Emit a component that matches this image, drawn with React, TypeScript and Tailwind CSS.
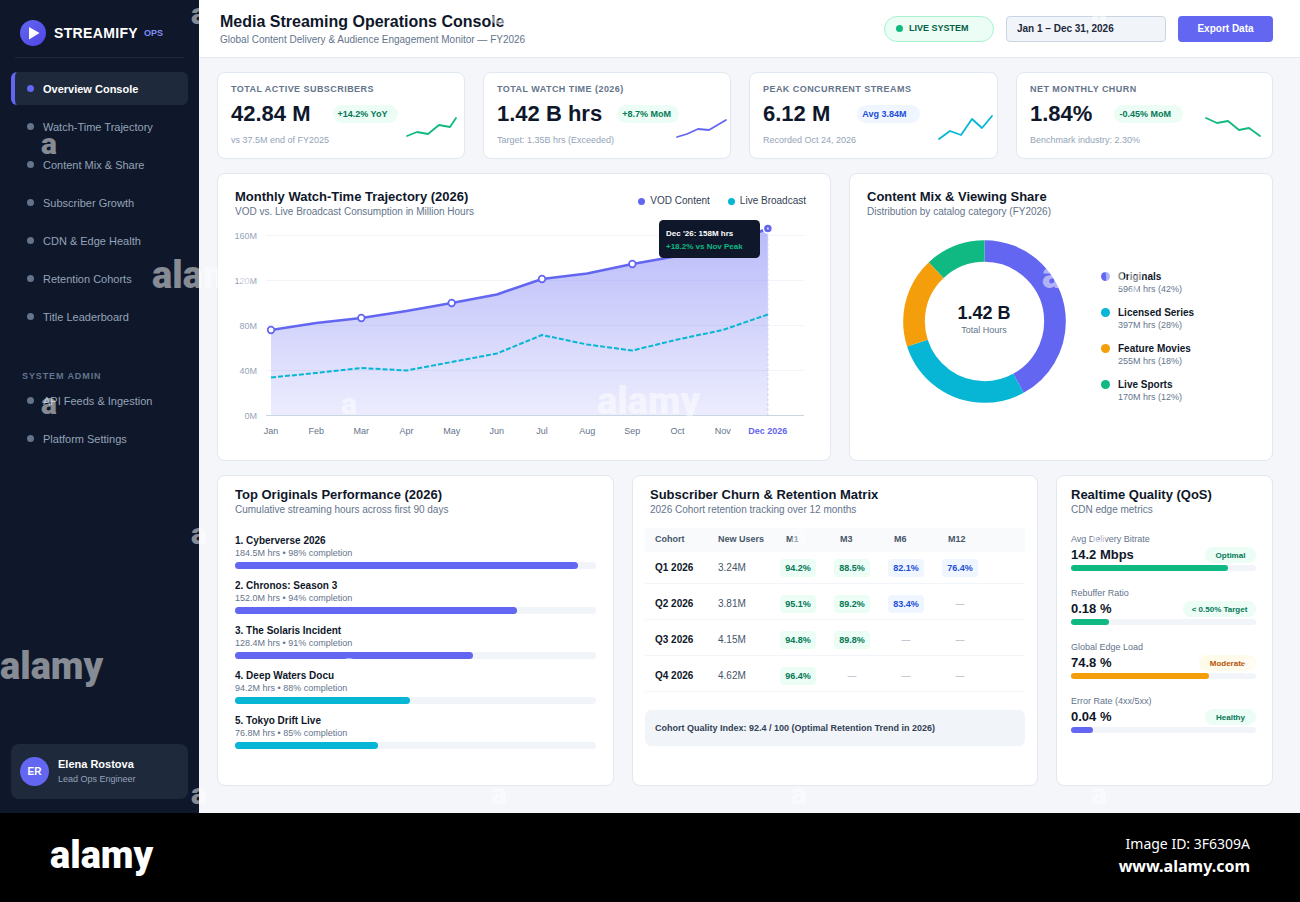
import { clsx } from 'clsx';

const NAV_ITEMS = [
  'Overview Console',
  'Watch-Time Trajectory',
  'Content Mix & Share',
  'Subscriber Growth',
  'CDN & Edge Health',
  'Retention Cohorts',
  'Title Leaderboard',
];

const ADMIN_ITEMS = ['API Feeds & Ingestion', 'Platform Settings'];

type Kpi = {
  label: string;
  value: string;
  note: string;
  badge: string;
  badgeClass: string;
  gapClass: string;
  sparkClass: string;
  stroke: string;
  points: string;
};

const KPIS: Kpi[] = [
  {
    label: 'TOTAL ACTIVE SUBSCRIBERS',
    value: '42.84 M',
    note: 'vs 37.5M end of FY2025',
    badge: '+14.2% YoY',
    badgeClass: 'bg-[#ecfdf5] text-[#047857] w-[65px]',
    gapClass: 'gap-[22px]',
    sparkClass: 'right-1',
    stroke: '#10b981',
    points: '1,20 11,16 22,18 33,9 44,11 50,2',
  },
  {
    label: 'TOTAL WATCH TIME (2026)',
    value: '1.42 B hrs',
    note: 'Target: 1.35B hrs (Exceeded)',
    badge: '+8.7% MoM',
    badgeClass: 'bg-[#ecfdf5] text-[#047857] w-[62px]',
    gapClass: 'gap-[15px]',
    sparkClass: 'right-0',
    stroke: '#6366f1',
    points: '1,21 11,18 22,13 33,14 50,4',
  },
  {
    label: 'PEAK CONCURRENT STREAMS',
    value: '6.12 M',
    note: 'Recorded Oct 24, 2026',
    badge: 'Avg 3.84M',
    badgeClass: 'bg-[#eff6ff] text-[#1d4ed8] w-[63px]',
    gapClass: 'gap-[27px]',
    sparkClass: 'right-1',
    stroke: '#06b6d4',
    points: '0,23 11,15 22,19 33,3 43,12 53,0',
  },
  {
    label: 'NET MONTHLY CHURN',
    value: '1.84%',
    note: 'Benchmark industry: 2.30%',
    badge: '-0.45% MoM',
    badgeClass: 'bg-[#ecfdf5] text-[#047857] w-[69px]',
    gapClass: 'gap-[22px]',
    sparkClass: 'right-3',
    stroke: '#10b981',
    points: '0,2 11,7 22,5 33,14 43,12 54,20',
  },
];

const MONTHS = ['Jan', 'Feb', 'Mar', 'Apr', 'May', 'Jun', 'Jul', 'Aug', 'Sep', 'Oct', 'Nov', 'Dec 2026'];
const VOD_Y = [112, 105, 100, 93, 85, 76.5, 61, 55.5, 46, 38, 28, 10.5];
const LIVE_Y = [159.5, 155, 150, 152.5, 144, 135.5, 117, 126.5, 132.5, 121.5, 112, 96.5];

const GRID = [
  { label: '160M', y: 17 },
  { label: '120M', y: 62 },
  { label: '80M', y: 107 },
  { label: '40M', y: 152 },
];

const MIX = [
  { name: 'Originals', detail: '596M hrs (42%)', share: 42, color: '#6366f1', dot: 'bg-[#6366f1]' },
  { name: 'Licensed Series', detail: '397M hrs (28%)', share: 28, color: '#06b6d4', dot: 'bg-[#06b6d4]' },
  { name: 'Feature Movies', detail: '255M hrs (18%)', share: 18, color: '#f59e0b', dot: 'bg-[#f59e0b]' },
  { name: 'Live Sports', detail: '170M hrs (12%)', share: 12, color: '#10b981', dot: 'bg-[#10b981]' },
];

const ORIGINALS = [
  { title: '1. Cyberverse 2026', meta: '184.5M hrs • 98% completion', width: 95, bar: 'bg-[#6366f1]' },
  { title: '2. Chronos: Season 3', meta: '152.0M hrs • 94% completion', width: 78, bar: 'bg-[#6366f1]' },
  { title: '3. The Solaris Incident', meta: '128.4M hrs • 91% completion', width: 66, bar: 'bg-[#6366f1]' },
  { title: '4. Deep Waters Docu', meta: '94.2M hrs • 88% completion', width: 48.5, bar: 'bg-[#06b6d4]' },
  { title: '5. Tokyo Drift Live', meta: '76.8M hrs • 85% completion', width: 39.5, bar: 'bg-[#06b6d4]' },
];

const COHORTS = [
  { name: 'Q1 2026', users: '3.24M', cells: ['94.2%', '88.5%', '82.1%', '76.4%'] },
  { name: 'Q2 2026', users: '3.81M', cells: ['95.1%', '89.2%', '83.4%', '—'] },
  { name: 'Q3 2026', users: '4.15M', cells: ['94.8%', '89.8%', '—', '—'] },
  { name: 'Q4 2026', users: '4.62M', cells: ['96.4%', '—', '—', '—'] },
];

const QOS = [
  { label: 'Avg Delivery Bitrate', value: '14.2 Mbps', tag: 'Optimal', tagClass: 'w-[51px] bg-[#ecfdf5] text-[#047857]', width: 85, bar: 'bg-[#10b981]' },
  { label: 'Rebuffer Ratio', value: '0.18 %', tag: '< 0.50% Target', tagClass: 'w-[73px] bg-[#ecfdf5] text-[#047857]', width: 20.5, bar: 'bg-[#10b981]' },
  { label: 'Global Edge Load', value: '74.8 %', tag: 'Moderate', tagClass: 'w-[57px] bg-[#fffbeb] text-[#b45309]', width: 74.8, bar: 'bg-[#f59e0b]' },
  { label: 'Error Rate (4xx/5xx)', value: '0.04 %', tag: 'Healthy', tagClass: 'w-[51px] bg-[#ecfdf5] text-[#047857]', width: 12, bar: 'bg-[#6366f1]' },
];

// Repeating stamp laid over the whole console, x / baseline y
const SMALL_MARKS = [
  [191, 25], [491, 25], [1091, 25],
  [41, 155], [941, 155],
  [41, 415], [341, 415], [941, 415],
  [191, 545], [791, 545], [1091, 545],
  [341, 675], [941, 675], [1241, 675],
  [191, 805], [491, 805], [791, 805], [1091, 805],
];

const LARGE_MARKS = [
  [152, 290], [1042, 290], [597, 416], [0, 681],
];

function NavLink({ label, active = false }: { label: string; active?: boolean }) {
  return (
    <a
      href="#"
      className={clsx(
        'flex h-[33px] items-center gap-[9px] rounded-md text-[11px]',
        active ? 'border-l-4 border-[#6366f1] bg-[#1e293b] pl-3 font-bold text-white' : 'pl-4 text-[#94a3b8]'
      )}
    >
      <span className={clsx('size-[7px] rounded-full', active ? 'bg-[#6366f1]' : 'bg-[#64748b]')} />
      <span className="pt-[2px]">{label}</span>
    </a>
  );
}

function Sidebar() {
  return (
    <aside className="flex w-[199px] shrink-0 flex-col bg-[#0f172a] px-[11px] pb-[14px]">
      <div className="mx-1 flex h-[58px] items-center border-b border-[#1e293b] pt-2 pl-[5px]">
        <svg className="size-[26px]" viewBox="0 0 26 26">
          <defs>
            <linearGradient id="logo" x1="0" y1="0" x2="1" y2="1">
              <stop offset="0" stopColor="#6366f1" />
              <stop offset="1" stopColor="#4f46e5" />
            </linearGradient>
          </defs>
          <circle cx="13" cy="13" r="13" fill="url(#logo)" />
          <path d="M9 7l10.500 6L9 19.500z" fill="#fff" />
        </svg>
        <span className="ml-2 text-sm font-bold tracking-wide text-white">STREAMIFY</span>
        <span className="ml-[6px] pt-[3px] text-[9px] font-bold text-[#818cf8]">OPS</span>
      </div>

      <nav className="mt-[14px] flex flex-col gap-[5px]">
        {NAV_ITEMS.map((item, i) => (
          <NavLink key={item} label={item} active={i === 0} />
        ))}
      </nav>

      <h2 className="mt-[37px] pl-[11px] text-[9px] leading-[12px] font-bold tracking-widest text-[#64748b]">SYSTEM ADMIN</h2>
      <nav className="mt-[2px] flex flex-col gap-[5px]">
        {ADMIN_ITEMS.map((item) => (
          <NavLink key={item} label={item} />
        ))}
      </nav>

      <div className="mt-auto flex h-[55px] items-center gap-[9px] rounded-lg bg-[#1e293b] pl-[9px]">
        <span className="flex size-[29px] items-center justify-center rounded-full bg-[#6366f1] text-[10px] font-bold text-white">ER</span>
        <div>
          <p className="text-[11px] leading-[14px] font-bold text-white">Elena Rostova</p>
          <p className="text-[9px] leading-[16px] text-[#94a3b8]">Lead Ops Engineer</p>
        </div>
      </div>
    </aside>
  );
}

function Header() {
  return (
    <header className="flex h-[58px] items-center justify-between border-b border-[#e2e8f0] bg-white pr-[27px] pl-[21px]">
      <div className="pt-[3px]">
        <h1 className="text-base leading-[20px] font-bold text-[#0f172a]">Media Streaming Operations Console</h1>
        <p className="text-[10px] leading-[16px] text-[#64748b]">Global Content Delivery &amp; Audience Engagement Monitor — FY2026</p>
      </div>
      <div className="flex items-center gap-3">
        <span className="flex h-[26px] w-[110px] items-center gap-[6px] rounded-full border border-[#a7f3d0] bg-[#ecfdf5] pl-[11px] text-[9px] font-bold text-[#065f46]">
          <span className="size-[7px] rounded-full bg-[#10b981]" />
          LIVE SYSTEM
        </span>
        <input
          type="text"
          aria-label="Date range"
          defaultValue="Jan 1 – Dec 31, 2026"
          className="h-[26px] w-[160px] rounded border border-[#cbd5e1] bg-[#f1f5f9] px-[10px] text-[10px] font-bold text-[#1e293b]"
        />
        <button type="button" className="h-[26px] w-[95px] rounded bg-[#6366f1] text-[10px] font-bold text-white">
          Export Data
        </button>
      </div>
    </header>
  );
}

function KpiCard({ kpi }: { kpi: Kpi }) {
  return (
    <section className="relative h-[87px] rounded-lg border border-[#e2e8f0] bg-white px-[13px] pt-[10px]">
      <h2 className="text-[9px] leading-[12px] font-bold tracking-wider text-[#64748b]">{kpi.label}</h2>
      <div className={clsx('mt-[3px] flex items-center', kpi.gapClass)}>
        <p className="text-[22px] leading-[32px] font-bold whitespace-nowrap text-[#0f172a]">{kpi.value}</p>
        <span className={clsx('h-[18px] rounded-full pl-[5px] text-[9px] leading-[18px] font-bold whitespace-nowrap', kpi.badgeClass)}>
          {kpi.badge}
        </span>
      </div>
      <p className="mt-1 text-[9px] leading-[12px] text-[#94a3b8]">{kpi.note}</p>
      <svg className={clsx('absolute bottom-[18px] h-6 w-[54px] overflow-visible', kpi.sparkClass)} viewBox="0 0 54 24">
        <polyline points={kpi.points} fill="none" stroke={kpi.stroke} strokeWidth="1.8" strokeLinecap="round" strokeLinejoin="round" />
      </svg>
    </section>
  );
}

function PanelHeading({ title, subtitle }: { title: string; subtitle: string }) {
  return (
    <div>
      <h2 className="text-[13px] leading-[16px] font-bold text-[#0f172a]">{title}</h2>
      <p className="text-[10px] leading-[14px] text-[#64748b]">{subtitle}</p>
    </div>
  );
}

function TrajectoryChart() {
  const x = (i: number) => 36 + i * 45.17;
  const toPoints = (ys: number[]) => ys.map((y, i) => `${x(i)},${y}`).join(' ');

  return (
    <svg className="block w-full" viewBox="0 1 578 223" fontFamily="Liberation Sans, Arial, sans-serif" fontSize="9">
      <defs>
        <linearGradient id="vodFill" x1="0" y1="0" x2="0" y2="1">
          <stop offset="0" stopColor="#6366f1" stopOpacity="0.45" />
          <stop offset="1" stopColor="#6366f1" stopOpacity="0.12" />
        </linearGradient>
      </defs>
      {GRID.map((line) => (
        <g key={line.label}>
          <line x1="31" x2="569" y1={line.y + 0.5} y2={line.y + 0.5} stroke="#f1f5f9" />
          <text x="22" y={line.y + 4} textAnchor="end" fill="#94a3b8">{line.label}</text>
        </g>
      ))}
      <text x="22" y="201" textAnchor="end" fill="#94a3b8">0M</text>

      <polygon points={`36,197.5 ${toPoints(VOD_Y)} ${x(11)},197.5`} fill="url(#vodFill)" />
      <line x1="31" x2="569" y1="197.5" y2="197.5" stroke="#cbd5e1" />
      <line x1={x(11)} x2={x(11)} y1="10" y2="197" stroke="#c7d2fe" strokeDasharray="3 2" />
      <polyline points={toPoints(VOD_Y)} fill="none" stroke="#6366f1" strokeWidth="2.6" strokeLinejoin="round" />
      <polyline points={toPoints(LIVE_Y)} fill="none" stroke="#06b6d4" strokeWidth="2" strokeDasharray="5 2" strokeLinejoin="round" />
      {[0, 2, 4, 6, 8].map((i) => (
        <circle key={i} cx={x(i)} cy={VOD_Y[i]} r="3.3" fill="#fff" stroke="#6366f1" strokeWidth="1.7" />
      ))}
      <circle cx={x(11)} cy="10.5" r="4.500" fill="#6366f1" stroke="#fff" strokeWidth="1.5" />
      <circle cx={x(11)} cy="10.5" r="1" fill="#e0e7ff" />

      {MONTHS.map((month, i) => (
        <text
          key={month}
          x={x(i)}
          y="216"
          textAnchor="middle"
          fill={i === 11 ? '#6366f1' : '#64748b'}
          fontWeight={i === 11 ? 'bold' : 'normal'}
        >
          {month}
        </text>
      ))}

      <rect x="424" y="2" width="101" height="38" rx="4.500" fill="#0f172a" />
      <text x="431" y="18" fill="#fff" fontWeight="bold" fontSize="8">Dec '26: 158M hrs</text>
      <text x="431" y="31" fill="#10b981" fontWeight="bold" fontSize="8">+18.2% vs Nov Peak</text>
    </svg>
  );
}

function TrajectoryPanel() {
  return (
    <section className="rounded-lg border border-[#e2e8f0] bg-white px-[17px] pt-[15px] pb-[18px]">
      <div className="flex items-center justify-between">
        <PanelHeading title="Monthly Watch-Time Trajectory (2026)" subtitle="VOD vs. Live Broadcast Consumption in Million Hours" />
        <div className="flex gap-[18px] pr-[7px] pb-[6px] text-[10px] leading-[16px] text-[#334155]">
          <span className="flex items-center gap-[5px]">
            <span className="size-[7px] rounded-full bg-[#6366f1]" />
            VOD Content
          </span>
          <span className="flex items-center gap-[5px]">
            <span className="size-[7px] rounded-full bg-[#06b6d4]" />
            Live Broadcast
          </span>
        </div>
      </div>
      <TrajectoryChart />
    </section>
  );
}

function ContentMixPanel() {
  let offset = 0;
  const slices = MIX.map((item) => {
    const slice = { ...item, start: offset };
    offset += item.share;
    return slice;
  });

  return (
    <section className="rounded-lg border border-[#e2e8f0] bg-white px-[17px] pt-[15px]">
      <PanelHeading title="Content Mix & Viewing Share" subtitle="Distribution by catalog category (FY2026)" />
      <div className="mt-5 flex items-center gap-[35px] pl-9">
        <svg className="size-[163px]" viewBox="0 0 163 163" fontFamily="Liberation Sans, Arial, sans-serif" textAnchor="middle">
          <g transform="rotate(-90 81.5 81.5)">
            {slices.map((s) => (
              <circle
                key={s.name}
                cx="81.5"
                cy="81.5"
                r="70.5"
                fill="none"
                stroke={s.color}
                strokeWidth="21.700"
                pathLength="100"
                strokeDasharray={`${s.share} ${100 - s.share}`}
                strokeDashoffset={-s.start}
              />
            ))}
          </g>
          <text x="81" y="79" fontSize="18" fontWeight="bold" fill="#0f172a">1.42 B</text>
          <text x="81" y="93" fontSize="9" fill="#64748b">Total Hours</text>
        </svg>
        <ul className="mt-[31px] flex flex-col gap-[10px]">
          {MIX.map((item) => (
            <li key={item.name} className="flex gap-2">
              <span className={clsx('mt-[2px] size-[9px] rounded-full', item.dot)} />
              <div>
                <p className="text-[10px] leading-[13px] font-bold text-[#0f172a]">{item.name}</p>
                <p className="text-[9px] leading-[13px] text-[#64748b]">{item.detail}</p>
              </div>
            </li>
          ))}
        </ul>
      </div>
    </section>
  );
}

function OriginalsPanel() {
  return (
    <section className="rounded-lg border border-[#e2e8f0] bg-white px-[17px] pt-[11px] pb-[36px]">
      <PanelHeading title="Top Originals Performance (2026)" subtitle="Cumulative streaming hours across first 90 days" />
      <ul className="mt-[17px] flex flex-col gap-[10px]">
        {ORIGINALS.map((row) => (
          <li key={row.title}>
            <p className="text-[10px] leading-[13px] font-bold text-[#0f172a]">{row.title}</p>
            <p className="text-[9px] leading-[13px] text-[#64748b]">{row.meta}</p>
            <div className="mt-[2px] h-[7px] rounded-full bg-[#f1f5f9]">
              <div className={clsx('h-full rounded-full', row.bar)} style={{ width: `${row.width}%` }} />
            </div>
          </li>
        ))}
      </ul>
    </section>
  );
}

function RetentionPanel() {
  return (
    <section className="rounded-lg border border-[#e2e8f0] bg-white px-[12px] pt-[11px]">
      <div className="pl-[5px]">
        <PanelHeading title="Subscriber Churn & Retention Matrix" subtitle="2026 Cohort retention tracking over 12 months" />
      </div>
      <table className="mt-[11px] w-full table-fixed text-left">
        <thead>
          <tr className="h-6 bg-[#f8fafc] text-[9px] text-[#475569]">
            <th className="w-[63px] pl-[10px]">Cohort</th>
            <th className="w-[72px] pl-[10px]">New Users</th>
            <th className="w-[54px] pl-[6px]">M1</th>
            <th className="w-[54px] pl-[6px]">M3</th>
            <th className="w-[54px] pl-[6px]">M6</th>
            <th className="pl-[6px]">M12</th>
          </tr>
        </thead>
        <tbody>
          {COHORTS.map((row, r) => (
            <tr key={row.name} className={clsx('border-b border-[#f1f5f9] align-bottom text-[10px] leading-[18px]', r === 0 ? 'h-[31px]' : 'h-9')}>
              <th className="pb-[6px] pl-[10px] font-bold text-[#0f172a]">{row.name}</th>
              <td className="pb-[6px] pl-[10px] text-[#475569]">{row.users}</td>
              {row.cells.map((cell, c) => (
                <td key={c} className="pb-[6px]">
                  <span
                    className={clsx(
                      'block w-9 rounded text-center text-[9px]',
                      cell === '—' ? 'text-[#94a3b8]' : c < 2 ? 'bg-[#ecfdf5] font-bold text-[#047857]' : 'bg-[#eff6ff] font-bold text-[#1d4ed8]'
                    )}
                  >
                    {cell}
                  </span>
                </td>
              ))}
            </tr>
          ))}
        </tbody>
      </table>
      <p className="mt-[18px] rounded-md bg-[#f1f5f9] pl-[10px] text-[9px] leading-[36px] font-bold text-[#334155]">
        Cohort Quality Index: 92.4 / 100 (Optimal Retention Trend in 2026)
      </p>
    </section>
  );
}

function QosPanel() {
  return (
    <section className="rounded-lg border border-[#e2e8f0] bg-white pt-[11px] pr-[16px] pl-[14px]">
      <PanelHeading title="Realtime Quality (QoS)" subtitle="CDN edge metrics" />
      <ul className="mt-[15px] flex flex-col gap-[15px]">
        {QOS.map((row) => (
          <li key={row.label}>
            <p className="text-[9px] leading-[14px] text-[#64748b]">{row.label}</p>
            <div className="flex h-[19px] items-center justify-between pb-[1px]">
              <p className="text-[13px] leading-[16px] font-bold text-[#0f172a]">{row.value}</p>
              <span className={clsx('h-4 rounded-full text-center text-[8px] leading-[17px] font-bold', row.tagClass)}>{row.tag}</span>
            </div>
            <div className="h-[6px] rounded-full bg-[#f1f5f9]">
              <div className={clsx('h-full rounded-full', row.bar)} style={{ width: `${row.width}%` }} />
            </div>
          </li>
        ))}
      </ul>
    </section>
  );
}

function Watermarks() {
  return (
    <div aria-hidden="true" className="pointer-events-none absolute inset-0 overflow-hidden font-[Roboto,sans-serif] font-black text-white/50">
      {SMALL_MARKS.map(([left, baseline]) => (
        <span key={`${left}-${baseline}`} className="absolute text-[30px] leading-[24px]" style={{ left, top: baseline - 23 }}>
          a
        </span>
      ))}
      {LARGE_MARKS.map(([left, baseline]) => (
        <span key={`${left}-${baseline}`} className="absolute text-[38px] leading-[38px]" style={{ left, top: baseline - 34 }}>
          alamy
        </span>
      ))}
    </div>
  );
}

function Footer() {
  return (
    <footer className="flex h-[89px] items-center justify-between bg-black px-[50px] pb-[5px] text-white">
      <span className="font-[Roboto,sans-serif] text-[38px] leading-[38px] font-black">alamy</span>
      <div className="text-right font-['Noto_Sans','Open_Sans',sans-serif] leading-[23px]">
        <p className="text-[14px] leading-[23px]">Image ID: 3F6309A</p>
        <p className="text-[16px] leading-[23px] font-bold">www.alamy.com</p>
      </div>
    </footer>
  );
}

export default function App() {
  return (
    <div className="font-['Liberation_Sans',Arial,sans-serif]">
      <div className="relative flex">
        <Sidebar />
        <div className="min-w-0 flex-1 bg-[#f4f6fa]">
          <Header />
          <main className="flex flex-col gap-[14px] pt-[14px] pr-[27px] pb-[27px] pl-[18px]">
            <div className="grid grid-cols-[248fr_248fr_249fr_257fr] gap-[18px]">
              {KPIS.map((kpi) => (
                <KpiCard key={kpi.label} kpi={kpi} />
              ))}
            </div>
            <div className="grid grid-cols-[614fr_424fr] gap-[18px]">
              <TrajectoryPanel />
              <ContentMixPanel />
            </div>
            <div className="grid grid-cols-[397fr_406fr_217fr] gap-[18px]">
              <OriginalsPanel />
              <RetentionPanel />
              <QosPanel />
            </div>
          </main>
        </div>
        <Watermarks />
      </div>
      <Footer />
    </div>
  );
}
